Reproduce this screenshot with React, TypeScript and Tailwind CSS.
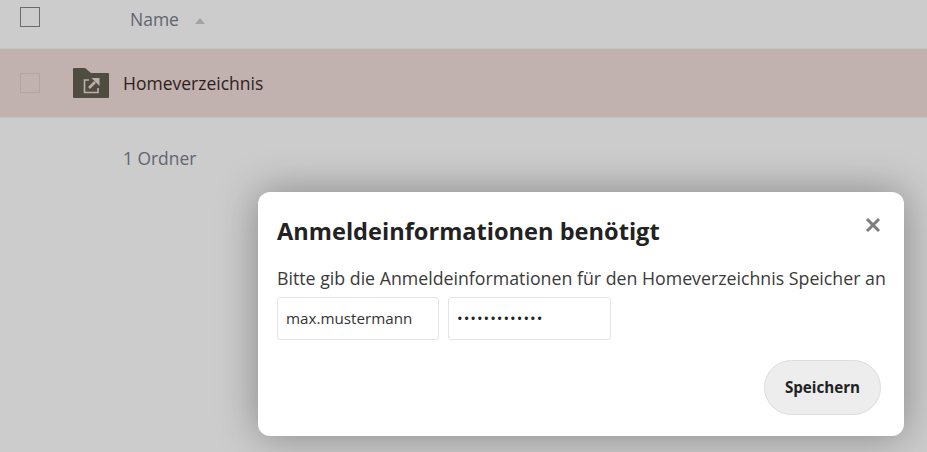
export default function App() {
  return (
    <div className="relative h-[452px] w-[927px] overflow-hidden bg-[#cccccc] font-['Open_Sans','Noto_Sans',sans-serif] text-[#222222]">
      <div className="flex h-[49px] items-start border-b border-[#c4c4c4]">
        <div className="ml-5 mt-[7px] h-5 w-5 border border-[#6b6b6b]" />
        <div className="ml-[90px] mt-[8px] flex items-center text-[17.5px] leading-[22px] text-[#5f6570]">
          <span>Name</span>
          <svg className="ml-[16px] mt-[3px]" width="10" height="6" viewBox="0 0 10 6">
            <path d="M0 6 L5 0 L10 6 Z" fill="#a3a3a3" />
          </svg>
        </div>
      </div>
      <div className="flex h-[69px] items-center border-b border-[#c4c4c4] bg-[#c1b1af]">
        <div className="ml-5 h-5 w-5 border border-[#b3a4a3]" />
        <svg className="ml-[33px]" width="36" height="30" viewBox="0 0 36 30">
          <path d="M1 0 H12 L18 5 H35 a1 1 0 0 1 1 1 V29 a1 1 0 0 1 -1 1 H1 a1 1 0 0 1 -1 -1 V1 a1 1 0 0 1 1 -1 Z" fill="#4f4c40" />
          <path d="M16 12 H11.5 V24.5 H25 V20" fill="none" stroke="#bfafac" strokeWidth="1.6" />
          <path d="M16 20 L22 14" fill="none" stroke="#bfafac" strokeWidth="2.6" />
          <path d="M18.5 10 H26.5 V18 Z" fill="#bfafac" />
        </svg>
        <span className="ml-[14px] text-[17.5px] text-[#2f1e1e]">Homeverzeichnis</span>
      </div>
      <div className="ml-[123px] mt-[29px] text-[17.4px] leading-[22px] text-[#5f6570]">1 Ordner</div>

      <div className="absolute left-[258px] top-[192px] h-[244px] w-[646px] rounded-xl bg-white pl-[19px] pr-[18px] pt-[23px] shadow-[0_0_40px_rgba(0,0,0,0.35)]">
        <svg className="absolute right-[23px] top-[25px]" width="16" height="16" viewBox="0 0 16 16">
          <path d="M2 2 L14 14 M14 2 L2 14" stroke="#7d7d7d" strokeWidth="3" />
        </svg>
        <h2 className="text-[23.6px] font-bold leading-8 text-[#222222]">Anmeldeinformationen benötigt</h2>
        <p className="mt-[19px] whitespace-nowrap text-[17.75px] leading-6 text-[#3a3a3a]">
          Bitte gib die Anmeldeinformationen für den Homeverzeichnis Speicher an
        </p>
        <div className="mt-[7px] flex gap-[9px]">
          <div className="flex h-[43px] w-[162px] items-center rounded-[3px] border border-[#e4e4e4] pl-2 text-[15.2px] text-[#333333]">
            max.mustermann
          </div>
          <div className="flex h-[43px] w-[163px] items-center rounded-[3px] border border-[#e4e4e4] pl-2 text-[15px] tracking-[1px] text-[#222222]">
            •••••••••••••
          </div>
        </div>
        <div className="mt-5 flex justify-end pr-[5px]">
          <button className="h-[55px] w-[117px] rounded-full border border-[#dddddd] bg-[#ededed] text-[15.2px] font-bold text-[#222222]">
            Speichern
          </button>
        </div>
      </div>
    </div>
  );
}
